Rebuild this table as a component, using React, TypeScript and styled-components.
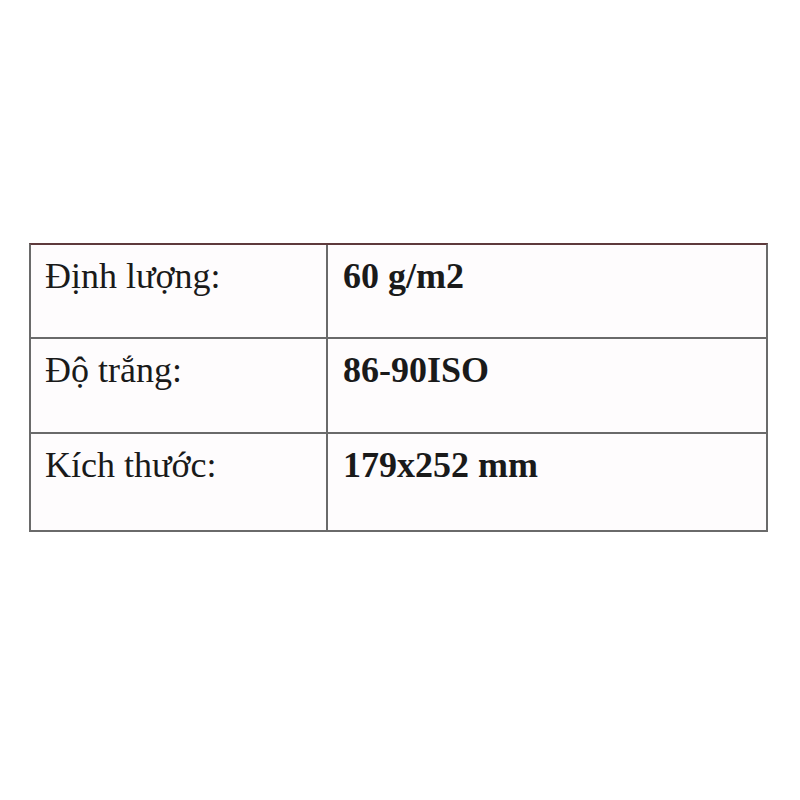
import React from 'react';
import styled, { createGlobalStyle } from 'styled-components';

const GlobalStyle = createGlobalStyle`
  html, body {
    margin: 0;
    padding: 0;
    background: #ffffff;
  }
`;

const Page = styled.div`
  width: 800px;
  height: 800px;
  padding-top: 243px;
  padding-left: 29px;
  box-sizing: border-box;
`;

const Table = styled.div`
  width: 739px;
  display: grid;
  grid-template-columns: 297px 1fr;
  grid-template-rows: 94px 95px 96px;
  border: 2px solid #6a6a6a;
  border-top-color: #5e3a3c;
  box-sizing: border-box;
  background: #fefcfd;
  font-family: 'Liberation Serif', 'Times New Roman', serif;
  color: #1a1a1a;
`;

const Cell = styled.div<{ $bold?: boolean; $last?: boolean; $right?: boolean }>`
  padding: 11px 0 0 ${p => (p.$right ? 15 : 14)}px;
  font-size: 36px;
  line-height: 1.15;
  font-weight: ${p => (p.$bold ? 700 : 400)};
  border-right: ${p => (p.$right ? 'none' : '2px solid #6a6a6a')};
  border-bottom: ${p => (p.$last ? 'none' : '2px solid #6a6a6a')};
`;

const rows = [
  { label: 'Định lượng:', value: '60 g/m2' },
  { label: 'Độ trắng:', value: '86-90ISO' },
  { label: 'Kích thước:', value: '179x252 mm' },
];

export default function App() {
  return (
    <>
      <GlobalStyle />
      <Page>
        <Table>
          {rows.map((r, i) => (
            <React.Fragment key={r.label}>
              <Cell $last={i === rows.length - 1}>{r.label}</Cell>
              <Cell $bold $right $last={i === rows.length - 1}>{r.value}</Cell>
            </React.Fragment>
          ))}
        </Table>
      </Page>
    </>
  );
}
